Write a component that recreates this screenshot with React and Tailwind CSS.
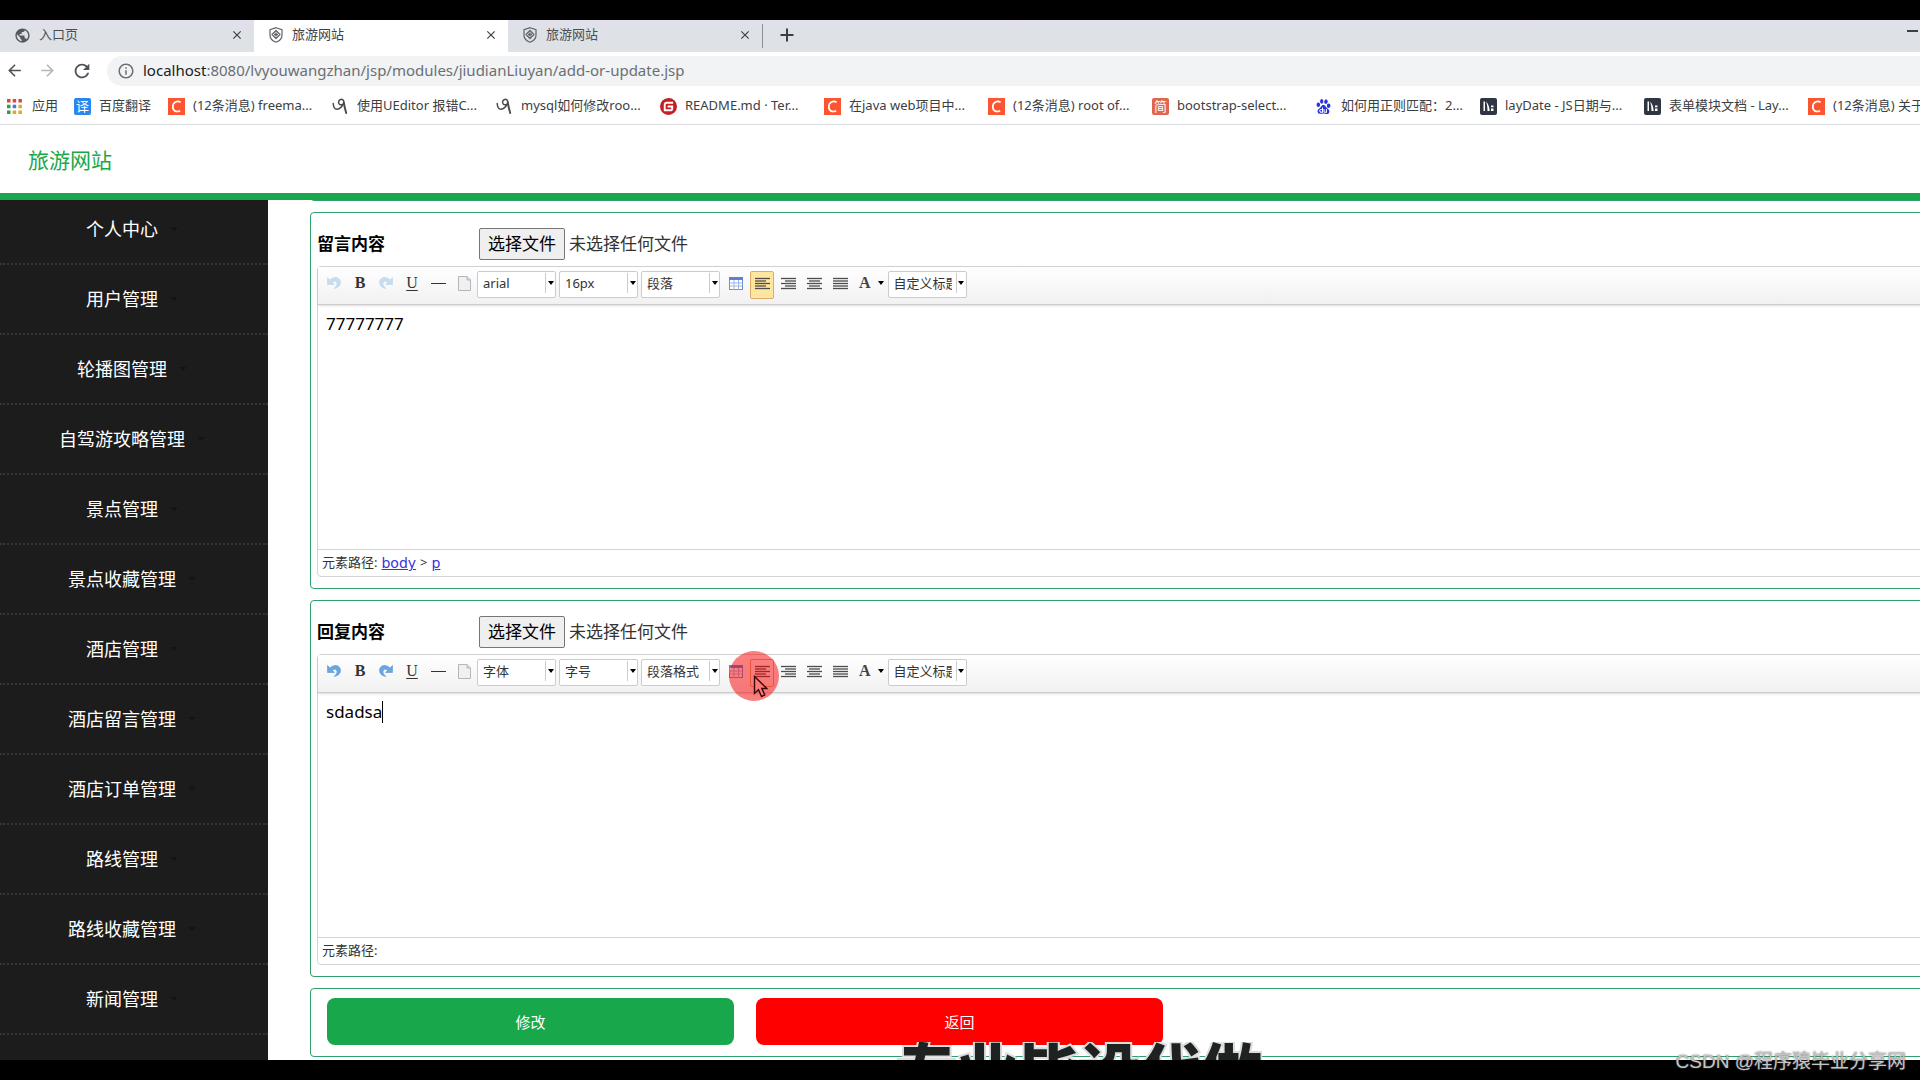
import { useState } from 'react';
import clsx from 'clsx';
import {
    MdArrowBack,
    MdArrowForward,
    MdClose,
    MdInfoOutline,
    MdPublic,
    MdRefresh
} from 'react-icons/md';
import { SiBaidu, SiGitee } from 'react-icons/si';

const TABS = [
    { title: '入口页', icon: 'globe' },
    { title: '旅游网站', icon: 'shield', active: true },
    { title: '旅游网站', icon: 'shield' }
];

const BOOKMARKS = [
    { icon: 'csdn', label: '(12条消息) freema...' },
    { icon: 'script', label: '使用UEditor 报错C...' },
    { icon: 'script', label: 'mysql如何修改roo...' },
    { icon: 'gitee', label: 'README.md · Ter...' },
    { icon: 'csdn', label: '在java web项目中...' },
    { icon: 'csdn', label: '(12条消息) root of...' },
    { icon: 'jianshu', label: 'bootstrap-select...' },
    { icon: 'baidu', label: '如何用正则匹配：2...' },
    { icon: 'layui', label: 'layDate - JS日期与...' },
    { icon: 'layui', label: '表单模块文档 - Lay...' },
    { icon: 'csdn', label: '(12条消息) 关于' }
];

const MENU = [
    '个人中心',
    '用户管理',
    '轮播图管理',
    '自驾游攻略管理',
    '景点管理',
    '景点收藏管理',
    '酒店管理',
    '酒店留言管理',
    '酒店订单管理',
    '路线管理',
    '路线收藏管理',
    '新闻管理'
];

function ShieldIcon() {
    return (
        <svg className="h-4 w-4" viewBox="0 0 16 16" fill="none" stroke="#5f6368">
            <path d="M8 .7 14 2.700v5.500c0 3.200-2.400 5.600-6 7-3.600-1.400-6-3.800-6-7V2.700z" strokeWidth="1.200" />
            <path d="M8 3.500 12 7.500 8 11.500 4 7.500z" strokeWidth="1.200" strokeLinejoin="round" />
            <path d="M8 5.500v4M6 7.500h4" strokeWidth="1.300" />
        </svg>
    );
}

function BookmarkIcon({ name }) {
    if (name === 'csdn') {
        return (
            <svg className="h-[17px] w-[17px] shrink-0" viewBox="0 0 17 17">
                <rect width="17" height="17" fill="#fc5531" />
                <path d="M12.600 4.300C9.500 2.500 4.800 3.800 4.800 8.700c0 4.700 4 5.700 7.400 4" fill="none" stroke="#fff" strokeWidth="1.700" />
            </svg>
        );
    }
    if (name === 'script') {
        return (
            <svg className="h-[17px] w-[17px] shrink-0" viewBox="0 0 17 17" fill="none" stroke="#4a4a4a" strokeLinecap="round">
                <path d="M1.200 5.500c.2 3.200 1.300 5.800 3.600 5.800 2.600 0 6.800-3.400 7-7C11.900 2 10.300 1 8.700 1.400c-2 .5-2.700 3-1.600 4.500 1.100 1.500 3.500 1 4.600-.6" strokeWidth="1.500" />
                <path d="M11.800 4.500c.6 3.800 1.400 7 2.400 10.500" strokeWidth="1.900" />
            </svg>
        );
    }
    if (name === 'layui') {
        return (
            <svg className="h-[17px] w-[17px] shrink-0" viewBox="0 0 17 17">
                <rect width="17" height="17" rx="2" fill="#2f3542" />
                <path d="M3.500 3.500H5V13H3.500zM6 3.500c2.200 2 3.500 5.500 3.700 9.500H7.500c0-3.500-.4-6.500-1.500-9.500zM11 7.500h2.500v1.800H11zM11 10.500h2.500V13H11z" fill="#fff" />
            </svg>
        );
    }
    if (name === 'jianshu') {
        return (
            <span className="flex h-[17px] w-[17px] shrink-0 items-center justify-center rounded-xs bg-[#e06650] text-[13px] leading-none text-white">
                简
            </span>
        );
    }
    if (name === 'gitee') {
        return <SiGitee className="h-[17px] w-[17px] shrink-0 text-[#c71d23]" />;
    }
    return (
        <span className="w-[17px] shrink-0">
            <SiBaidu className="h-[15px] w-[15px] text-[#2932e1]" />
        </span>
    );
}

function Browser() {
    return (
        <div className="shrink-0 border-b border-[#dadce0] bg-white">
            <div className="flex h-8 bg-gradient-to-b from-[#e1dfec] to-[#dee1e6] to-40%">
                {TABS.map((tab, index) => (
                    <div
                        key={index}
                        className={clsx(
                            'flex w-[254px] items-center pr-2.5 pb-0.5 pl-3.5 text-[13px]',
                            tab.active ? 'bg-white text-[#3c4043]' : 'text-[#4b4f54]',
                            index === 0 && 'rounded-br-lg',
                            index === 2 && 'rounded-bl-lg'
                        )}
                    >
                        {tab.icon === 'globe' ? (
                            <MdPublic className="h-[17px] w-[17px] text-[#55595e]" />
                        ) : (
                            <ShieldIcon />
                        )}
                        <span className="ml-2 flex-1">{tab.title}</span>
                        <button type="button" aria-label="关闭">
                            <MdClose className="h-3.5 w-3.5 text-[#3c4043]" stroke="#3c4043" />
                        </button>
                    </div>
                ))}
                <div className="my-1 w-px bg-[#8d9196]" />
                <button type="button" aria-label="新标签页" className="px-4 pb-0.5">
                    <svg className="h-4 w-4" viewBox="0 0 16 16" stroke="#3c4043" strokeWidth="2">
                        <path d="M8 1.500v13M1.500 8h13" />
                    </svg>
                </button>
                <button type="button" aria-label="最小化" className="ml-auto w-[13px]">
                    <span className="mb-2.5 block h-0.5 w-[11px] bg-[#3c4043]" />
                </button>
            </div>

            <div className="flex h-[38px] items-center pb-px pl-[5px]">
                <button type="button" aria-label="后退" className="mr-3.5">
                    <MdArrowBack className="h-[19px] w-[19px] text-[#4f5357]" />
                </button>
                <button type="button" aria-label="前进" className="mr-3.5">
                    <MdArrowForward className="h-[19px] w-[19px] text-[#b4b6b9]" />
                </button>
                <button type="button" aria-label="刷新" className="mr-3.5">
                    <MdRefresh className="h-[22px] w-[22px] text-[#4f5357]" />
                </button>
                <div className="flex h-[30px] flex-1 items-center rounded-l-full bg-[#f1f3f4] pl-2.5 text-[15px] text-[#6b6f74]">
                    <MdInfoOutline className="mr-2 h-[18px] w-[18px]" />
                    <p>
                        <span className="text-[#202124]">localhost</span>
                        :8080/lvyouwangzhan/jsp/modules/jiudianLiuyan/add-or-update.jsp
                    </p>
                </div>
            </div>

            <div className="flex h-[34px] items-center overflow-hidden pb-0.5 pl-[7px] text-[13px] whitespace-nowrap text-[#3c4043]">
                <a href="#" className="flex w-[67px] shrink-0 items-center gap-2.5">
                    <svg className="h-[15px] w-[15px]" viewBox="0 0 15 15">
                        <path d="M0 0h3.500v3.500H0zM5.700 0h3.500v3.500H5.700zM11.400 0h3.500v3.500h-3.500z" fill="#d9483b" />
                        <path d="M0 5.700h3.500v3.500H0zM0 11.400h3.500v3.500H0z" fill="#2f9b50" />
                        <path d="M5.700 5.700h3.500v3.500H5.700z" fill="#3f7de0" />
                        <path d="M11.400 5.700h3.500v3.500h-3.500zM5.700 11.400h3.500v3.500H5.700zM11.400 11.400h3.500v3.500h-3.500z" fill="#dcaa2c" />
                    </svg>
                    应用
                </a>
                <a href="#" className="flex w-[94px] shrink-0 items-center gap-2">
                    <span className="flex h-[17px] w-[17px] items-center justify-center rounded-xs bg-[#2a86ee] text-[13px] leading-none text-white">
                        译
                    </span>
                    百度翻译
                </a>
                {BOOKMARKS.map((item, index) => (
                    <a key={index} href="#" className="flex w-[164px] shrink-0 items-center gap-2">
                        <BookmarkIcon name={item.icon} />
                        {item.label}
                    </a>
                ))}
            </div>
        </div>
    );
}

function Sidebar() {
    return (
        <aside className="w-[268px] shrink-0 overflow-hidden bg-[#1c1c1c]">
            <nav className="-mt-[5px]">
                {MENU.map((item) => (
                    <a
                        key={item}
                        href="#"
                        className="flex h-[70px] items-center justify-center gap-1.5 border-b-2 border-dotted border-[#34343a] pr-1 text-lg text-white"
                    >
                        {item}
                        <span className="ml-1.5 h-0 w-0 border-x-4 border-t-4 border-x-transparent border-t-[#141414]" />
                    </a>
                ))}
            </nav>
        </aside>
    );
}

function ToolButton({ label, active, hover, children }) {
    return (
        <button
            type="button"
            aria-label={label}
            className={clsx(
                'mx-px flex h-7 w-6 items-center justify-center rounded-xs border pb-1 text-base',
                active && 'border-[#dcac6c] bg-[#ffe69f]',
                hover && 'border-[#dcac6c]',
                !active && !hover && 'border-transparent'
            )}
        >
            {children}
        </button>
    );
}

function Caret() {
    return <span className="h-0 w-0 border-x-3 border-t-4 border-x-transparent border-t-black" />;
}

function ToolSelect({ label, value, className }) {
    return (
        <span className={clsx('flex h-[27px] w-[79px] rounded-xs border border-[#ccc] bg-white', className)}>
            <select
                aria-label={label}
                className="min-w-0 flex-1 appearance-none overflow-hidden pb-0.5 pl-[5px] text-[13px] text-[#333] outline-none"
            >
                <option>{value}</option>
            </select>
            <span className="mt-px mb-1 ml-1 flex w-[10px] items-center justify-center border-l border-[#ccc]">
                <Caret />
            </span>
        </span>
    );
}

// lines of every alignment icon, top to bottom
const ALIGN_LINES = {
    left: ['M0 1.500h15', 'M0 4h11', 'M0 6.500h15', 'M0 9h11', 'M0 11.500h15'],
    right: ['M0 1.500h15', 'M4 4h11', 'M0 6.500h15', 'M4 9h11', 'M0 11.500h15'],
    center: ['M0 1.500h15', 'M2 4h11', 'M0 6.500h15', 'M2 9h11', 'M0 11.500h15'],
    justify: ['M0 1.500h15', 'M0 4h15', 'M0 6.500h15', 'M0 9h15', 'M0 11.500h15']
};

function AlignIcon({ type }) {
    return (
        <svg className="h-[13px] w-[15px]" viewBox="0 0 15 13" stroke="#4d4d4d" strokeWidth="1.300">
            {ALIGN_LINES[type].map((d) => (
                <path key={d} d={d} />
            ))}
        </svg>
    );
}

function UndoIcon({ flip, disabled }) {
    return (
        <svg
            className={clsx('h-[14px] w-[14px]', flip && '-scale-x-100', disabled && 'opacity-35')}
            viewBox="0 0 14 14"
        >
            <path
                d="M.5 1.500v7h7L5.300 6.300c1.500-1.600 4.400-1.300 4.700 1 .2 1.900-1 3.500-2.800 5.200 3.800-.8 6.300-3 6.300-6.100C13.500 1.300 7-.6 3 4z"
                fill="#68a8e2"
                stroke="#4a8ccb"
                strokeWidth=".5"
            />
        </svg>
    );
}

function Toolbar({ font, size, paragraph, undoable, alignActive }) {
    return (
        <div className="flex h-[38px] items-start border-b border-[#ccc] bg-gradient-to-b from-white to-[#f1f1f1] pt-1 pl-[3px] text-[#333] shadow-sm">
            <ToolButton label="撤销">
                <UndoIcon disabled={!undoable} />
            </ToolButton>
            <ToolButton label="加粗">
                <b className="font-['Liberation_Serif',serif] leading-none">B</b>
            </ToolButton>
            <ToolButton label="重做">
                <UndoIcon flip disabled={!undoable} />
            </ToolButton>
            <ToolButton label="下划线">
                <u className="font-['Liberation_Serif',serif] leading-none underline-offset-2">U</u>
            </ToolButton>
            <ToolButton label="分隔线">
                <span className="h-px w-[15px] bg-[#333]" />
            </ToolButton>
            <ToolButton label="清空文档">
                <svg className="h-[15px] w-[13px]" viewBox="0 0 13 15">
                    <path d="M.5.5h8.500l3.500 3.500v10.500H.5z" fill="#f0f0f3" stroke="#b4b4ba" />
                    <path d="M9 .5V4h3.500" fill="#d5d5dc" stroke="#b4b4ba" />
                </svg>
            </ToolButton>
            <ToolSelect label="字体" value={font} />
            <ToolSelect label="字号" value={size} className="ml-[3px]" />
            <ToolSelect label="段落格式" value={paragraph} className="mx-[3px]" />
            <ToolButton label="插入表格">
                <svg className="h-[13px] w-[14px]" viewBox="0 0 14 13">
                    <rect x=".5" y=".5" width="13" height="12" fill="#fff" stroke="#6a8fd0" />
                    <path d="M0 0h14v3H0z" fill="#5a82d8" />
                    <path d="M.5 6h13M.5 9h13M5 3v10M9.500 3v10" stroke="#9db7e4" />
                </svg>
            </ToolButton>
            <ToolButton label="居左对齐" active={alignActive} hover={!alignActive}>
                <AlignIcon type="left" />
            </ToolButton>
            <ToolButton label="居右对齐">
                <AlignIcon type="right" />
            </ToolButton>
            <ToolButton label="居中对齐">
                <AlignIcon type="center" />
            </ToolButton>
            <ToolButton label="两端对齐">
                <AlignIcon type="justify" />
            </ToolButton>
            <button type="button" aria-label="字体颜色" className="flex h-7 items-center gap-[7px] pb-1 pl-1.5">
                <b className="font-['Liberation_Serif',serif] text-base leading-none text-[#444]">A</b>
                <Caret />
            </button>
            <ToolSelect label="自定义标题" value="自定义标题" className="ml-1" />
        </div>
    );
}

function EditorPanel({ id, title, initialText, path, focused, overlay, ...toolbar }) {
    const [text, setText] = useState(initialText);

    return (
        <section className="rounded-sm border border-[#2f9f6c] pt-[15px] pb-[11px] pl-1.5">
            <div className="mb-1.5 flex h-8 items-center text-[17px]">
                <label htmlFor={`${id}-text`} className="w-[162px] font-bold text-black">
                    {title}
                </label>
                <label
                    htmlFor={`${id}-file`}
                    className="mr-1 flex h-8 w-[86px] items-center justify-center rounded-xs border border-[#767676] bg-[#efefef] text-black"
                >
                    选择文件
                </label>
                <input id={`${id}-file`} type="file" className="hidden" />
                <span className="text-[#333]">未选择任何文件</span>
            </div>

            <div className="relative rounded-sm border border-[#d4d4d4]">
                <Toolbar {...toolbar} />
                <div className="relative">
                    <textarea
                        id={`${id}-text`}
                        value={text}
                        onChange={(e) => setText(e.target.value)}
                        className="block h-[244px] w-full resize-none px-2 py-[7px] text-[17px] leading-6 text-black outline-none"
                    />
                    {focused && (
                        <span className="absolute top-2 left-2 flex h-[22px] text-[17px]">
                            <span className="invisible">{text}</span>
                            <span className="w-px bg-black" />
                        </span>
                    )}
                </div>
                <p className="flex h-[27px] items-center gap-1 border-t border-[#d4d4d4] pl-1 text-[13px] text-[#333]">
                    元素路径:
                    {path.map((node, index) => (
                        <span key={node} className="flex items-center gap-1">
                            {index > 0 && <span>&gt;</span>}
                            <a href="#" className="font-['DejaVu_Sans',sans-serif] text-sm text-[#3a32e0] underline">
                                {node}
                            </a>
                        </span>
                    ))}
                </p>
                {overlay}
            </div>
        </section>
    );
}

function ClickPointer() {
    return (
        <div className="pointer-events-none absolute -top-1 left-[411px] h-[50px] w-[50px] rounded-full bg-[#fa0000]/50">
            <svg className="absolute top-6 left-6 h-[24px] w-[16px]" viewBox="0 0 16 24">
                <path
                    d="M1.500 1.500v17l4-3.700 3 6.700 3.300-1.500-3-6.500h5z"
                    fill="#ff7878"
                    stroke="#3d0808"
                    strokeWidth="1.400"
                />
            </svg>
        </div>
    );
}

export default function App() {
    return (
        <div className="relative flex h-screen flex-col overflow-hidden border-t-20 border-black bg-white font-['Noto_Sans','Noto_Sans_CJK_SC',sans-serif]">
            <Browser />

            <header className="relative z-10 flex h-[75px] shrink-0 items-center border-b-7 border-[#18a84b] bg-white pt-[3px] pl-7">
                <h1 className="text-[21px] text-[#18a84b]">旅游网站</h1>
            </header>

            <div className="flex min-h-0 flex-1">
                <Sidebar />
                <main className="min-w-0 flex-1 overflow-hidden pl-[42px]">
                    <form className="-mt-3 -mr-9 flex flex-col gap-[11px]" onSubmit={(e) => e.preventDefault()}>
                        <div className="h-[13px] rounded-sm border border-[#2f9f6c]" />
                        <EditorPanel
                            id="message"
                            title="留言内容"
                            initialText="77777777"
                            path={['body', 'p']}
                            font="arial"
                            size="16px"
                            paragraph="段落"
                            alignActive
                        />
                        <EditorPanel
                            id="reply"
                            title="回复内容"
                            initialText="sdadsa"
                            path={[]}
                            font="字体"
                            size="字号"
                            paragraph="段落格式"
                            undoable
                            focused
                            overlay={<ClickPointer />}
                        />
                        <div className="flex gap-[22px] rounded-sm border border-[#2f9f6c] pt-[9px] pb-[11px] pl-4 text-[15px] text-white">
                            <button type="submit" className="h-[47px] w-1/4 rounded-lg bg-[#18a84b] pt-0.5">
                                修改
                            </button>
                            <button type="button" className="h-[47px] w-1/4 rounded-lg bg-[#ff0000] pt-0.5">
                                返回
                            </button>
                        </div>
                    </form>
                </main>
            </div>

            <div className="relative h-5 shrink-0 bg-black">
                <div className="absolute bottom-full left-[896px] h-[18px] overflow-hidden">
                    <p className="text-[61px] leading-[60px] font-black whitespace-nowrap text-[#1e2220] [-webkit-text-stroke:4px_#dcdcdc] [paint-order:stroke_fill]">
                        专业毕设代做
                    </p>
                </div>
                <p className="absolute right-3.5 bottom-1 font-['Liberation_Sans','Noto_Sans_CJK_SC',sans-serif] text-[19px] leading-7 text-[#c4c4c4] [text-shadow:0_0_2px_#555]">
                    CSDN @程序猿毕业分享网
                </p>
            </div>
        </div>
    );
}
